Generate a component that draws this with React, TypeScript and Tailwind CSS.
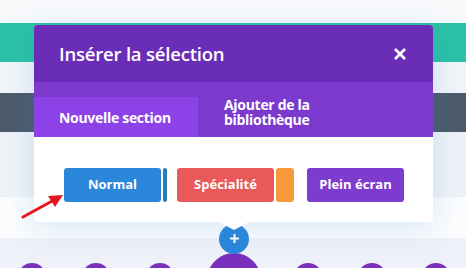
import React from "react";

/**
 * Divi-style "Insérer la sélection" popup over a page builder canvas.
 */
export default function App() {
  return (
    <div
      className="relative h-[268px] w-[466px] overflow-hidden bg-[#f8f9fb]"
      style={{ fontFamily: '"Open Sans", "Liberation Sans", sans-serif' }}
    >
      {/* Page background bands */}
      <div className="h-[23px] bg-[#f8f9fb]" />
      <div className="h-[39px] bg-[#2bc1a6]" />
      <div className="h-[31px] bg-[#f1f4f9]" />
      <div className="h-[39px] bg-[#4d5a6b]" />
      <div className="h-[65px] bg-[#eef2f7]" />
      <div className="h-[41px] bg-[#fbfcfd]" />
      <div className="flex h-[30px] gap-[36px] overflow-visible bg-[#eef1f8] pl-[18px]">
        <Dot />
        <Dot />
        <Dot />
        <div className="-mx-[3px] mt-[15px] h-[54px] w-[54px] shrink-0 rounded-full bg-[#7a2fbd]" />
        <Dot />
        <Dot />
        <Dot />
      </div>

      {/* Add section button */}
      <div className="absolute left-[219px] top-[224px] flex h-[30px] w-[30px] items-center justify-center rounded-full bg-[#2b87da]">
        <svg width="9" height="9" viewBox="0 0 9 9" className="-mt-[1px]" aria-hidden="true">
          <path d="M4.5 0v9M0 4.5h9" stroke="#fff" strokeWidth="2" />
        </svg>
      </div>

      {/* Modal */}
      <div className="absolute left-[34px] top-[25px] z-10 w-[399px] rounded-[3px] bg-white shadow-[0_5px_30px_rgba(43,135,218,0.18)]">
        <div className="flex h-[57px] items-center justify-between rounded-t-[3px] bg-[#6a2db7] pl-[25px] pr-[27px]">
          <span className="text-[18.5px] font-semibold tracking-[-0.2px] text-white">Insérer la sélection</span>
          <svg width="12" height="12" viewBox="0 0 12 12" aria-hidden="true">
            <path d="M1 1l10 10M11 1L1 11" stroke="#fff" strokeWidth="2.6" />
          </svg>
        </div>
        <div className="flex h-[55px] items-end bg-[#7b3acd]">
          <div className="flex h-[40px] w-[164px] items-center bg-[#8d42e7] pl-[25px] text-[14px] font-bold tracking-[-0.3px] text-white">
            Nouvelle section
          </div>
          <p className="mb-[10px] pl-[26px] text-[14px] font-bold leading-[15px] tracking-[-0.3px] text-white">
            Ajouter de la
            <br />
            bibliothèque
          </p>
        </div>
        <div className="relative flex h-[85px] items-center gap-[10px] pl-[30px] pt-[10px] text-[13px] font-bold text-white">
          <div className="flex gap-[2px]">
            <div className="flex h-[34px] w-[97px] items-center justify-center rounded-[3px] bg-[#2b87da]">Normal</div>
            <div className="h-[34px] w-[4px] rounded-[2px] bg-[#2a7bb6]" />
          </div>
          <div className="flex gap-[2px]">
            <div className="flex h-[34px] w-[97px] items-center justify-center rounded-[3px] bg-[#ea5959]">Spécialité</div>
            <div className="h-[34px] w-[18px] rounded-[3px] bg-[#f7993b]" />
          </div>
          <div className="ml-[3px] flex h-[34px] w-[97px] items-center justify-center rounded-[3px] bg-[#7e3bd0]">
            Plein écran
          </div>
          {/* Pointer */}
          <div className="absolute bottom-[-8px] left-[185px] h-0 w-0 border-x-[15px] border-t-[8px] border-x-transparent border-t-white" />
        </div>
      </div>

      {/* Red pointer arrow */}
      <svg className="absolute left-[18px] top-[190px] z-20" width="50" height="32" viewBox="0 0 50 32" aria-hidden="true">
        <path d="M5 27 L36 10" stroke="#e3171d" strokeWidth="3" strokeLinecap="round" />
        <path d="M45 5 L30 6 L37 17 Z" fill="#e3171d" />
      </svg>
    </div>
  );
}

function Dot() {
  return <div className="mt-[25px] h-[28px] w-[28px] shrink-0 rounded-full bg-[#7a2fbd]" />;
}
